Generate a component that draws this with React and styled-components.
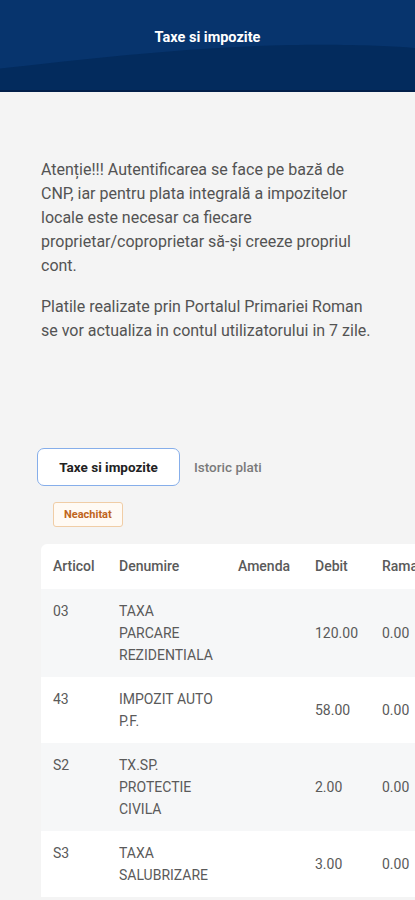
import React from "react";
import styled, { createGlobalStyle } from "styled-components";

const Global = createGlobalStyle`
  html, body { margin: 0; padding: 0; background: #f4f4f4; }
  body { font-family: Roboto, "Noto Sans", "Liberation Sans", sans-serif; overflow-x: hidden; }
  * { box-sizing: border-box; }
`;

const Page = styled.div`
  min-height: 900px;
  background: #f4f4f4;
  overflow: hidden;
`;

const Header = styled.header`
  position: relative;
  height: 92px;
  background: #07346d;
  border-bottom: 2px solid #021f4a;
  display: flex;
  justify-content: center;
  overflow: hidden;
`;

const Wave = styled.svg`
  position: absolute;
  left: 0;
  top: 0;
  width: 100%;
  height: 100%;
`;

const Title = styled.h1`
  position: relative;
  margin: 28px 0 0;
  font-size: 14.5px;
  line-height: 20px;
  font-weight: 700;
  color: #ffffff;
`;

const Main = styled.main`
  padding: 66px 41px 0;
`;

const Para = styled.p`
  margin: 0 0 ${(p) => (p.$last ? 0 : 17)}px;
  font-size: 16px;
  line-height: 24px;
  color: #535353;
`;

const TabBar = styled.div`
  display: flex;
  margin: 105px 0 0 -4px;
`;

const Tab = styled.button`
  height: 38px;
  padding: 0 ${(p) => (p.$active ? 0 : 14)}px;
  width: ${(p) => (p.$active ? "143px" : "auto")};
  font-family: inherit;
  font-size: 13.5px;
  font-weight: ${(p) => (p.$active ? 700 : 500)};
  color: ${(p) => (p.$active ? "#222" : "#7a7a7a")};
  background: ${(p) => (p.$active ? "#fff" : "transparent")};
  border: ${(p) => (p.$active ? "1.5px solid #86aeea" : "none")};
  border-radius: 7px;
  cursor: pointer;
`;

const Badge = styled.span`
  display: inline-flex;
  align-items: center;
  height: 25px;
  margin: 16px 0 0 12px;
  padding: 0 10px;
  font-size: 11px;
  font-weight: 700;
  color: #c0651c;
  background: #fffaf4;
  border: 1px solid #f0cda6;
  border-radius: 3px;
`;

const TableWrap = styled.div`
  margin: 17px -41px 0 0;
  overflow: hidden;
`;

const Table = styled.table`
  width: 600px;
  table-layout: fixed;
  border-collapse: separate;
  border-spacing: 0;
  font-size: 14px;
  color: #5a5a5a;
`;

const Th = styled.th`
  text-align: left;
  font-weight: 500;
  line-height: 19px;
  padding: 13px 11px 13px 12px;
  background: #fff;
  color: #5a5a5a;
  &:first-child { border-top-left-radius: 6px; }
`;

const Row = styled.tr`
  background: ${(p) => (p.$alt ? "#f6f7f8" : "#ffffff")};
`;

const Td = styled.td`
  padding: 11px 11px 11px 12px;
  line-height: 22px;
  vertical-align: ${(p) => (p.$top ? "top" : "middle")};
  color: #5a5a5a;
`;

const cols = [66, 119, 77, 67, 67, 67, 137];
const heads = ["Articol", "Denumire", "Amenda", "Debit", "Ramas", "Majorari", "Total"];
const rows = [
  { a: "03", d: "TAXA PARCARE REZIDENTIALA", debit: "120.00", r: "0.00" },
  { a: "43", d: "IMPOZIT AUTO P.F.", debit: "58.00", r: "0.00" },
  { a: "S2", d: "TX.SP. PROTECTIE CIVILA", debit: "2.00", r: "0.00" },
  { a: "S3", d: "TAXA SALUBRIZARE", debit: "3.00", r: "0.00" },
];

export default function App() {
  return (
    <Page>
      <Global />
      <Header>
        <Wave viewBox="0 0 415 92" preserveAspectRatio="none">
          <path d="M0 70 C 90 60, 190 48, 290 46 C 350 45, 390 47, 415 49 L415 92 L0 92 Z" fill="#032b5d" />
        </Wave>
        <Title>Taxe si impozite</Title>
      </Header>
      <Main>
        <Para>
          Atenție!!! Autentificarea se face pe bază de CNP, iar pentru plata integrală a impozitelor
          locale este necesar ca fiecare proprietar/coproprietar să-și creeze propriul cont.
        </Para>
        <Para $last>
          Platile realizate prin Portalul Primariei Roman se vor actualiza in contul utilizatorului in 7 zile.
        </Para>
        <TabBar>
          <Tab $active>Taxe si impozite</Tab>
          <Tab>Istoric plati</Tab>
        </TabBar>
        <Badge>Neachitat</Badge>
        <TableWrap>
          <Table>
            <colgroup>
              {cols.map((w, i) => (
                <col key={i} style={{ width: w }} />
              ))}
            </colgroup>
            <thead>
              <tr>
                {heads.map((h) => (
                  <Th key={h}>{h}</Th>
                ))}
              </tr>
            </thead>
            <tbody>
              {rows.map((r, i) => (
                <Row key={r.a} $alt={i % 2 === 0}>
                  <Td $top>{r.a}</Td>
                  <Td $top>{r.d}</Td>
                  <Td></Td>
                  <Td>{r.debit}</Td>
                  <Td>{r.r}</Td>
                  <Td>0.00</Td>
                  <Td>{r.debit}</Td>
                </Row>
              ))}
            </tbody>
          </Table>
        </TableWrap>
      </Main>
    </Page>
  );
}
